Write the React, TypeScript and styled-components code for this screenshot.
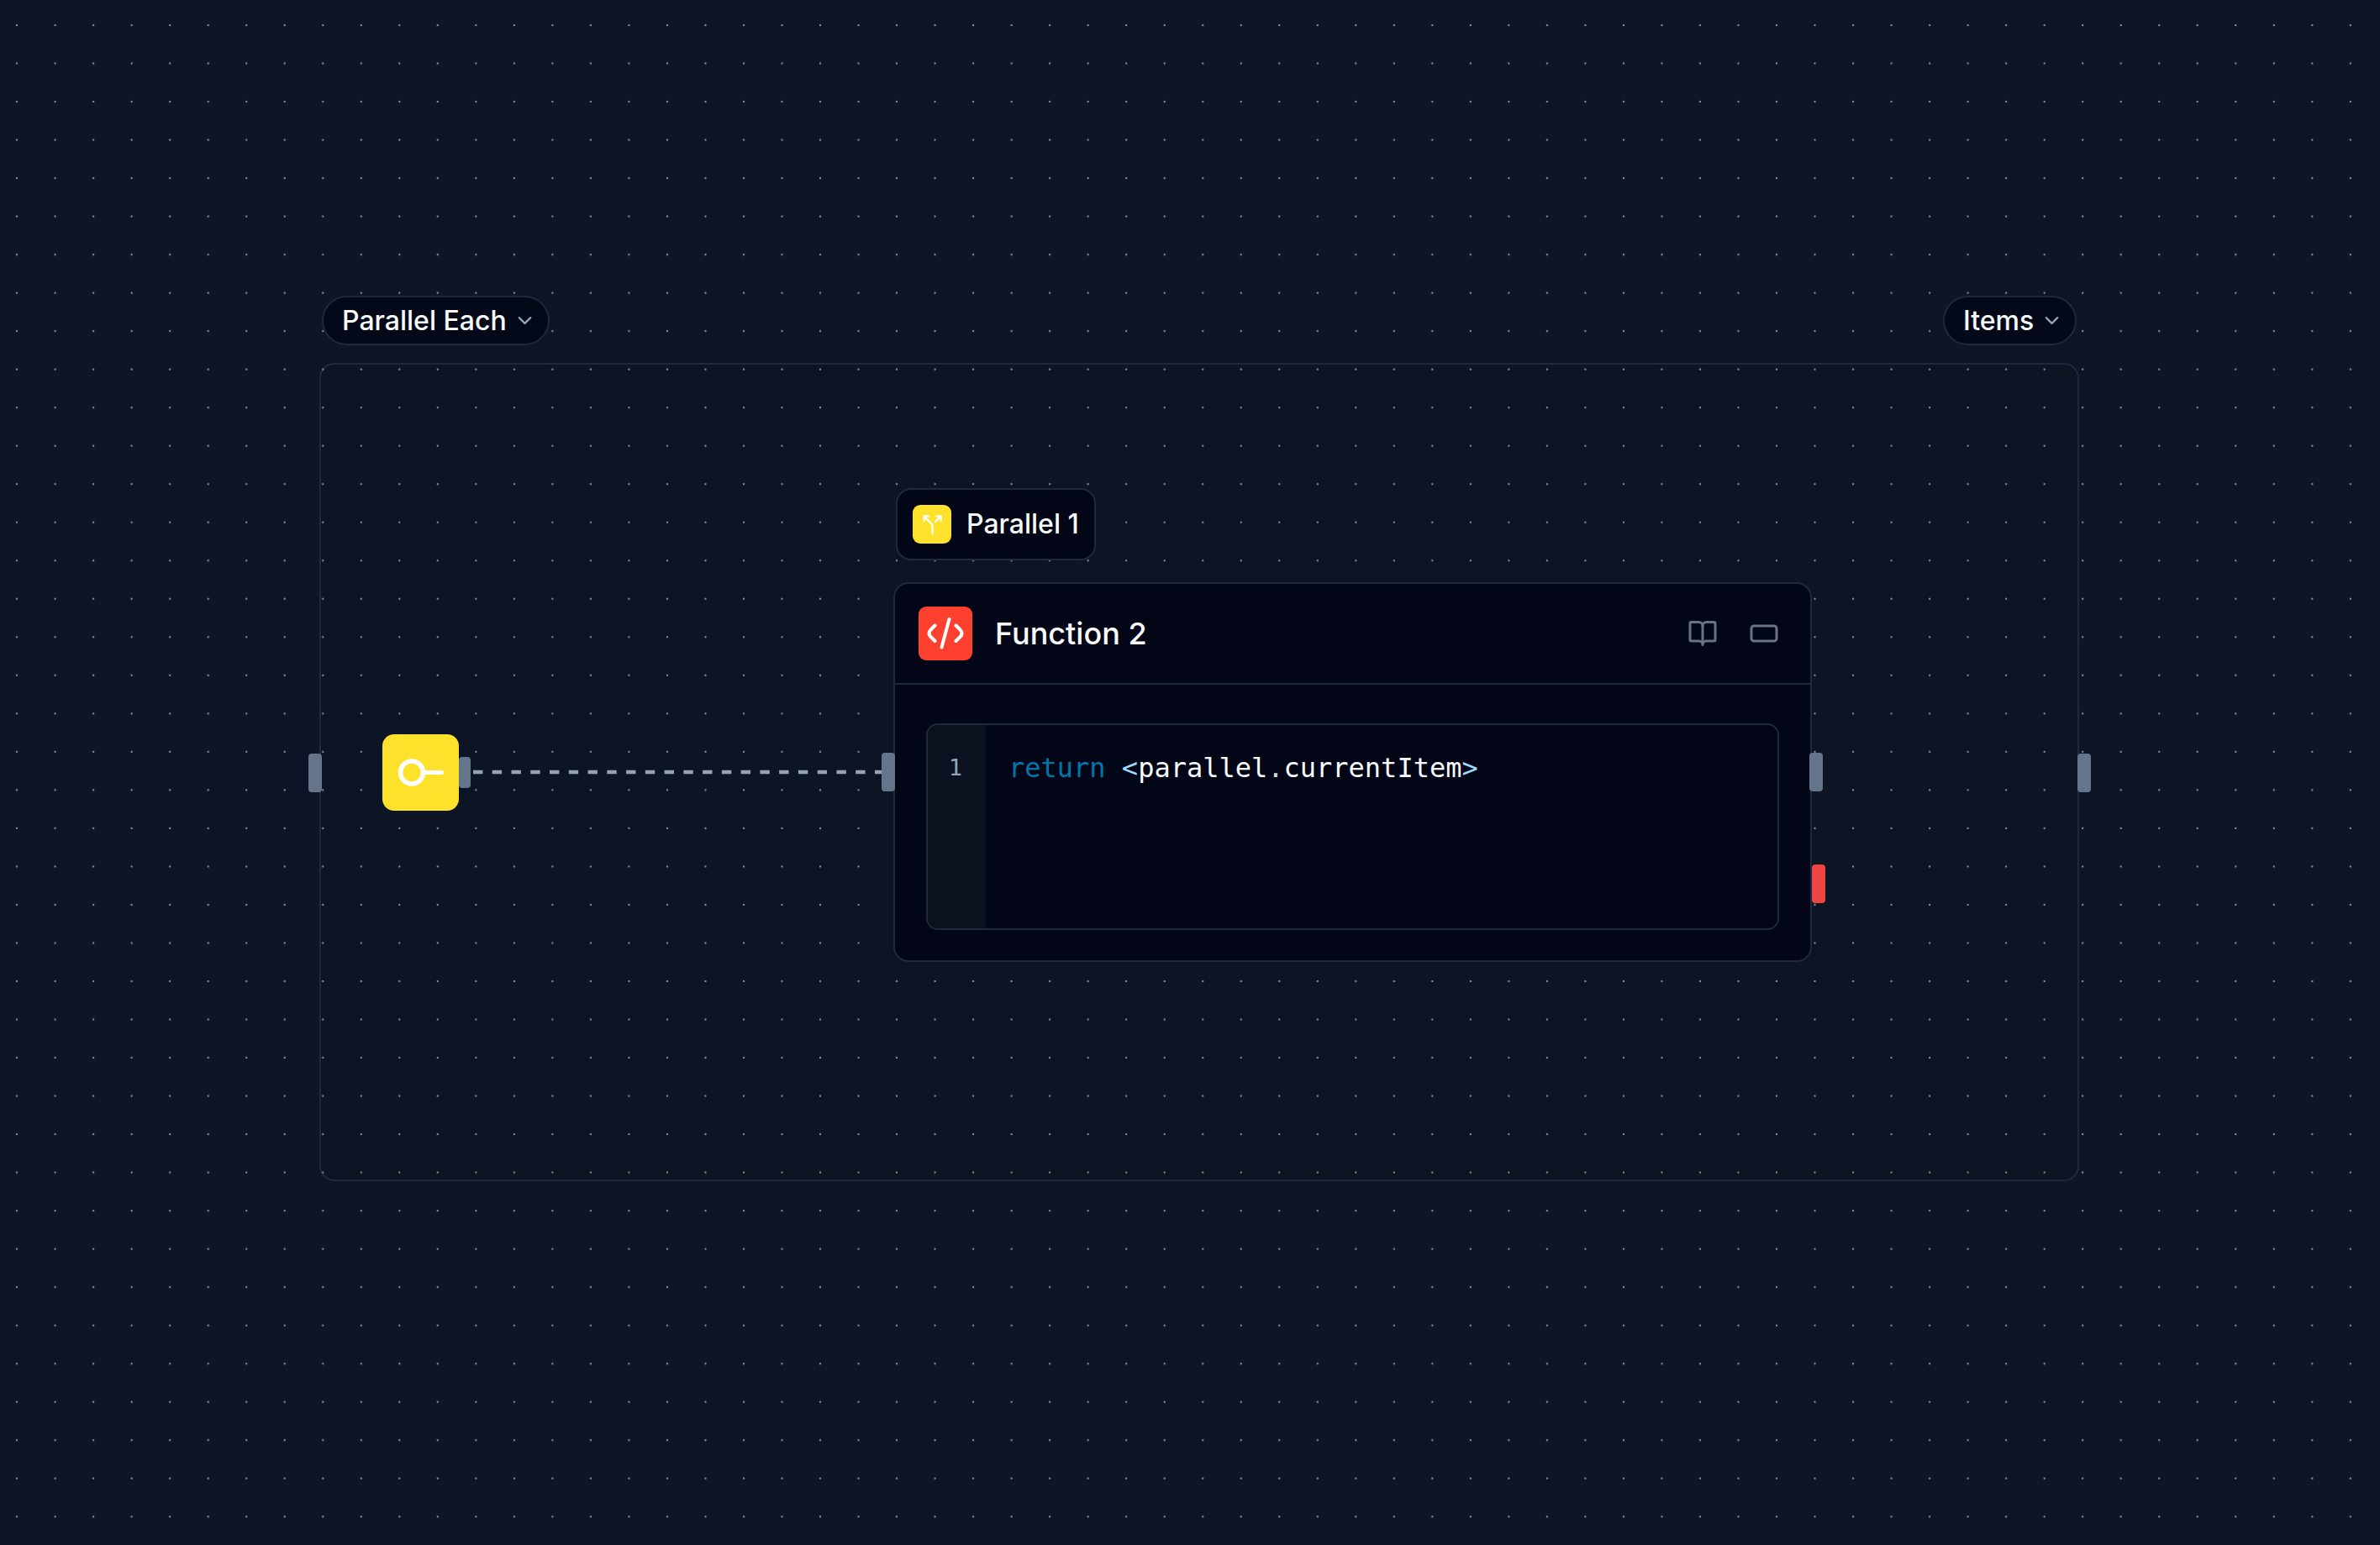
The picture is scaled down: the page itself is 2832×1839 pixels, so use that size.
import React from "react";
import styled, { createGlobalStyle } from "styled-components";
import { ChevronDown, RectangleHorizontal } from "lucide-react";

const ZOOM = 2.276;
const GRID_GAP = 20 * ZOOM;

const GlobalStyle = createGlobalStyle`
  * { box-sizing: border-box; }
  body {
    margin: 0;
    background: #0f1527;
    color: #f8fafc;
    font-family: Inter, "Liberation Sans", sans-serif;
  }
  button { font: inherit; color: inherit; cursor: pointer; }
`;

const Canvas = styled.main`
  position: relative;
  min-height: 100vh;
  overflow: hidden;
`;

const Backdrop = styled.svg`
  position: absolute;
  inset: 0;
  width: 100%;
  height: 100%;
`;

/* A node sits on the free canvas at its own coordinates. */
const Node = styled.div<{ $x: number; $y: number }>`
  position: absolute;
  left: ${(p) => p.$x}px;
  top: ${(p) => p.$y}px;
`;

const GroupFrame = styled(Node)`
  width: 2094px;
  height: 974px;
  border: 2px solid #1e293b;
  border-radius: 18px;
  background: #0d1423;
`;

const Pill = styled.button`
  display: flex;
  align-items: center;
  gap: 8px;
  height: 59px;
  padding: 0 14px 0 22px;
  border: 2px solid #1e293b;
  border-radius: 30px;
  background: #030918;
  font-size: 32px;
  font-weight: 500;
  line-height: 40px;
  white-space: nowrap;
  svg { color: #94a3b8; }
`;

const Tag = styled(Node)`
  display: flex;
  align-items: center;
  gap: 18px;
  height: 86px;
  padding: 0 18px;
  border: 2px solid #1e293b;
  border-radius: 18px;
  background: #020617;
  font-size: 32px;
  font-weight: 500;
  line-height: 40px;
  white-space: nowrap;
`;

const Tile = styled.span<{ $size: number; $color: string; $radius: number }>`
  display: grid;
  place-items: center;
  flex: none;
  width: ${(p) => p.$size}px;
  height: ${(p) => p.$size}px;
  border-radius: ${(p) => p.$radius}px;
  background: ${(p) => p.$color};
`;

const Card = styled(Node)`
  width: 1093px;
  border: 2px solid #1e293b;
  border-radius: 18px;
  background: #020617;
`;

const CardHeader = styled.header`
  display: flex;
  align-items: center;
  gap: 27px;
  height: 120px;
  padding: 0 37px 0 28px;
  border-bottom: 2px solid #1e293b;
`;

const CardTitle = styled.h2`
  flex: 1;
  margin: 0;
  font-size: 36px;
  font-weight: 500;
  line-height: 40px;
`;

const Tools = styled.div`
  display: flex;
  gap: 37px;
`;

const IconButton = styled.button`
  display: flex;
  padding: 0;
  border: 0;
  background: none;
  color: #6b7280;
`;

const CardBody = styled.div`
  padding: 46px 37px 36px;
`;

const Editor = styled.div`
  display: flex;
  height: 246px;
  border: 2px solid #1e293b;
  border-radius: 14px;
  overflow: hidden;
  font-family: "DejaVu Sans Mono", monospace;
  line-height: 48px;
`;

const Gutter = styled.div`
  width: 69px;
  padding: 27px 28px 0 0;
  background: #0b111f;
  color: #94a3b8;
  font-size: 27px;
  text-align: right;
`;

const Code = styled.pre`
  margin: 0;
  padding: 27px 27px 0;
  font: inherit;
  font-size: 32px;
`;

const Token = styled.span<{ $color: string }>`
  color: ${(p) => p.$color};
`;

const Handle = styled(Node)<{ $color?: string; $small?: boolean }>`
  width: ${(p) => (p.$small ? 14 : 16)}px;
  height: ${(p) => (p.$small ? 37 : 46)}px;
  border-radius: 4px;
  background: ${(p) => p.$color ?? "#64748b"};
`;

function SplitIcon() {
  return (
    <svg width="27" height="27" viewBox="0 0 24 24" fill="none" stroke="#fff" strokeWidth="2" strokeLinecap="round" strokeLinejoin="round">
      <path d="M16 3h5v5M8 3H3v5M12 22v-8.3a4 4 0 0 0-1.172-2.872L3 3M15 9l6-6" />
    </svg>
  );
}

function CodeIcon() {
  return (
    <svg width="46" height="46" viewBox="0 0 46 46" fill="none" stroke="#fff" strokeWidth="4" strokeLinecap="round" strokeLinejoin="round">
      <path d="M10.500 13.500L5.500 18.500Q1.500 22.800 5.500 27L10.500 32" />
      <path d="M35.500 13.500L40.500 18.500Q44.500 22.800 40.500 27L35.500 32" />
      <path d="M27.500 6L18.500 39.500" />
    </svg>
  );
}

function StartIcon() {
  return (
    <svg width="91" height="91" viewBox="0 0 91 91" fill="none" stroke="#fff" strokeWidth="5" strokeLinecap="round">
      <circle cx="35" cy="45.500" r="13.500" strokeWidth="5.500" />
      <path d="M50 45.500H70.500" />
    </svg>
  );
}

function BookIcon() {
  return (
    <svg width="36" height="36" viewBox="0 0 24 24" fill="none" stroke="currentColor" strokeWidth="2" strokeLinecap="round" strokeLinejoin="round">
      <path d="M12 6v15" />
      <path d="M12 6a3 3 0 0 0-3-3H3a1 1 0 0 0-1 1v13a1 1 0 0 0 1 1h6a3 3 0 0 1 3 2 3 3 0 0 1 3-2h6a1 1 0 0 0 1-1V4a1 1 0 0 0-1-1h-6a3 3 0 0 0-3 3" />
    </svg>
  );
}

export default function App() {
  return (
    <Canvas>
      <GlobalStyle />
      <GroupFrame $x={380} $y={432} />
      <Backdrop aria-hidden="true">
        <defs>
          <pattern id="dots" x={20.1 - GRID_GAP / 2} y={30 - GRID_GAP / 2} width={GRID_GAP} height={GRID_GAP} patternUnits="userSpaceOnUse">
            <circle cx={GRID_GAP / 2} cy={GRID_GAP / 2} r={0.5 * ZOOM} fill="#91949c" />
          </pattern>
        </defs>
        <rect width="100%" height="100%" fill="url(#dots)" />
        <line x1="563" y1="919" x2="1050" y2="919" stroke="#94a3b8" strokeWidth={2 * ZOOM} strokeDasharray={5 * ZOOM} />
      </Backdrop>

      <Node $x={383} $y={352}>
        <Pill type="button">
          Parallel Each
          <ChevronDown size={27} />
        </Pill>
      </Node>
      <Node $x={2312} $y={352}>
        <Pill type="button">
          Items
          <ChevronDown size={27} />
        </Pill>
      </Node>

      <Node $x={455} $y={874}>
        <Tile $size={91} $radius={14} $color="#fee12b">
          <StartIcon />
        </Tile>
      </Node>

      <Tag $x={1066} $y={581}>
        <Tile $size={46} $radius={9} $color="#fee12b">
          <SplitIcon />
        </Tile>
        Parallel 1
      </Tag>

      <Card $x={1063} $y={693}>
        <CardHeader>
          <Tile $size={64} $radius={9} $color="#ff402f">
            <CodeIcon />
          </Tile>
          <CardTitle>Function 2</CardTitle>
          <Tools>
            <IconButton type="button" aria-label="Docs">
              <BookIcon />
            </IconButton>
            <IconButton type="button" aria-label="Toggle width">
              <RectangleHorizontal size={36} />
            </IconButton>
          </Tools>
        </CardHeader>
        <CardBody>
          <Editor>
            <Gutter>1</Gutter>
            <Code>
              <Token $color="#0077aa">return</Token> <Token $color="#9cdcfe">&lt;</Token>parallel
              <Token $color="#d4d4d4">.</Token>currentItem<Token $color="#9cdcfe">&gt;</Token>
            </Code>
          </Editor>
        </CardBody>
      </Card>

      <Handle $x={367} $y={897} />
      <Handle $x={546} $y={901} $small />
      <Handle $x={1049} $y={896} />
      <Handle $x={2153} $y={896} />
      <Handle $x={2156} $y={1029} $color="#ef4444" />
      <Handle $x={2472} $y={897} />
    </Canvas>
  );
}
